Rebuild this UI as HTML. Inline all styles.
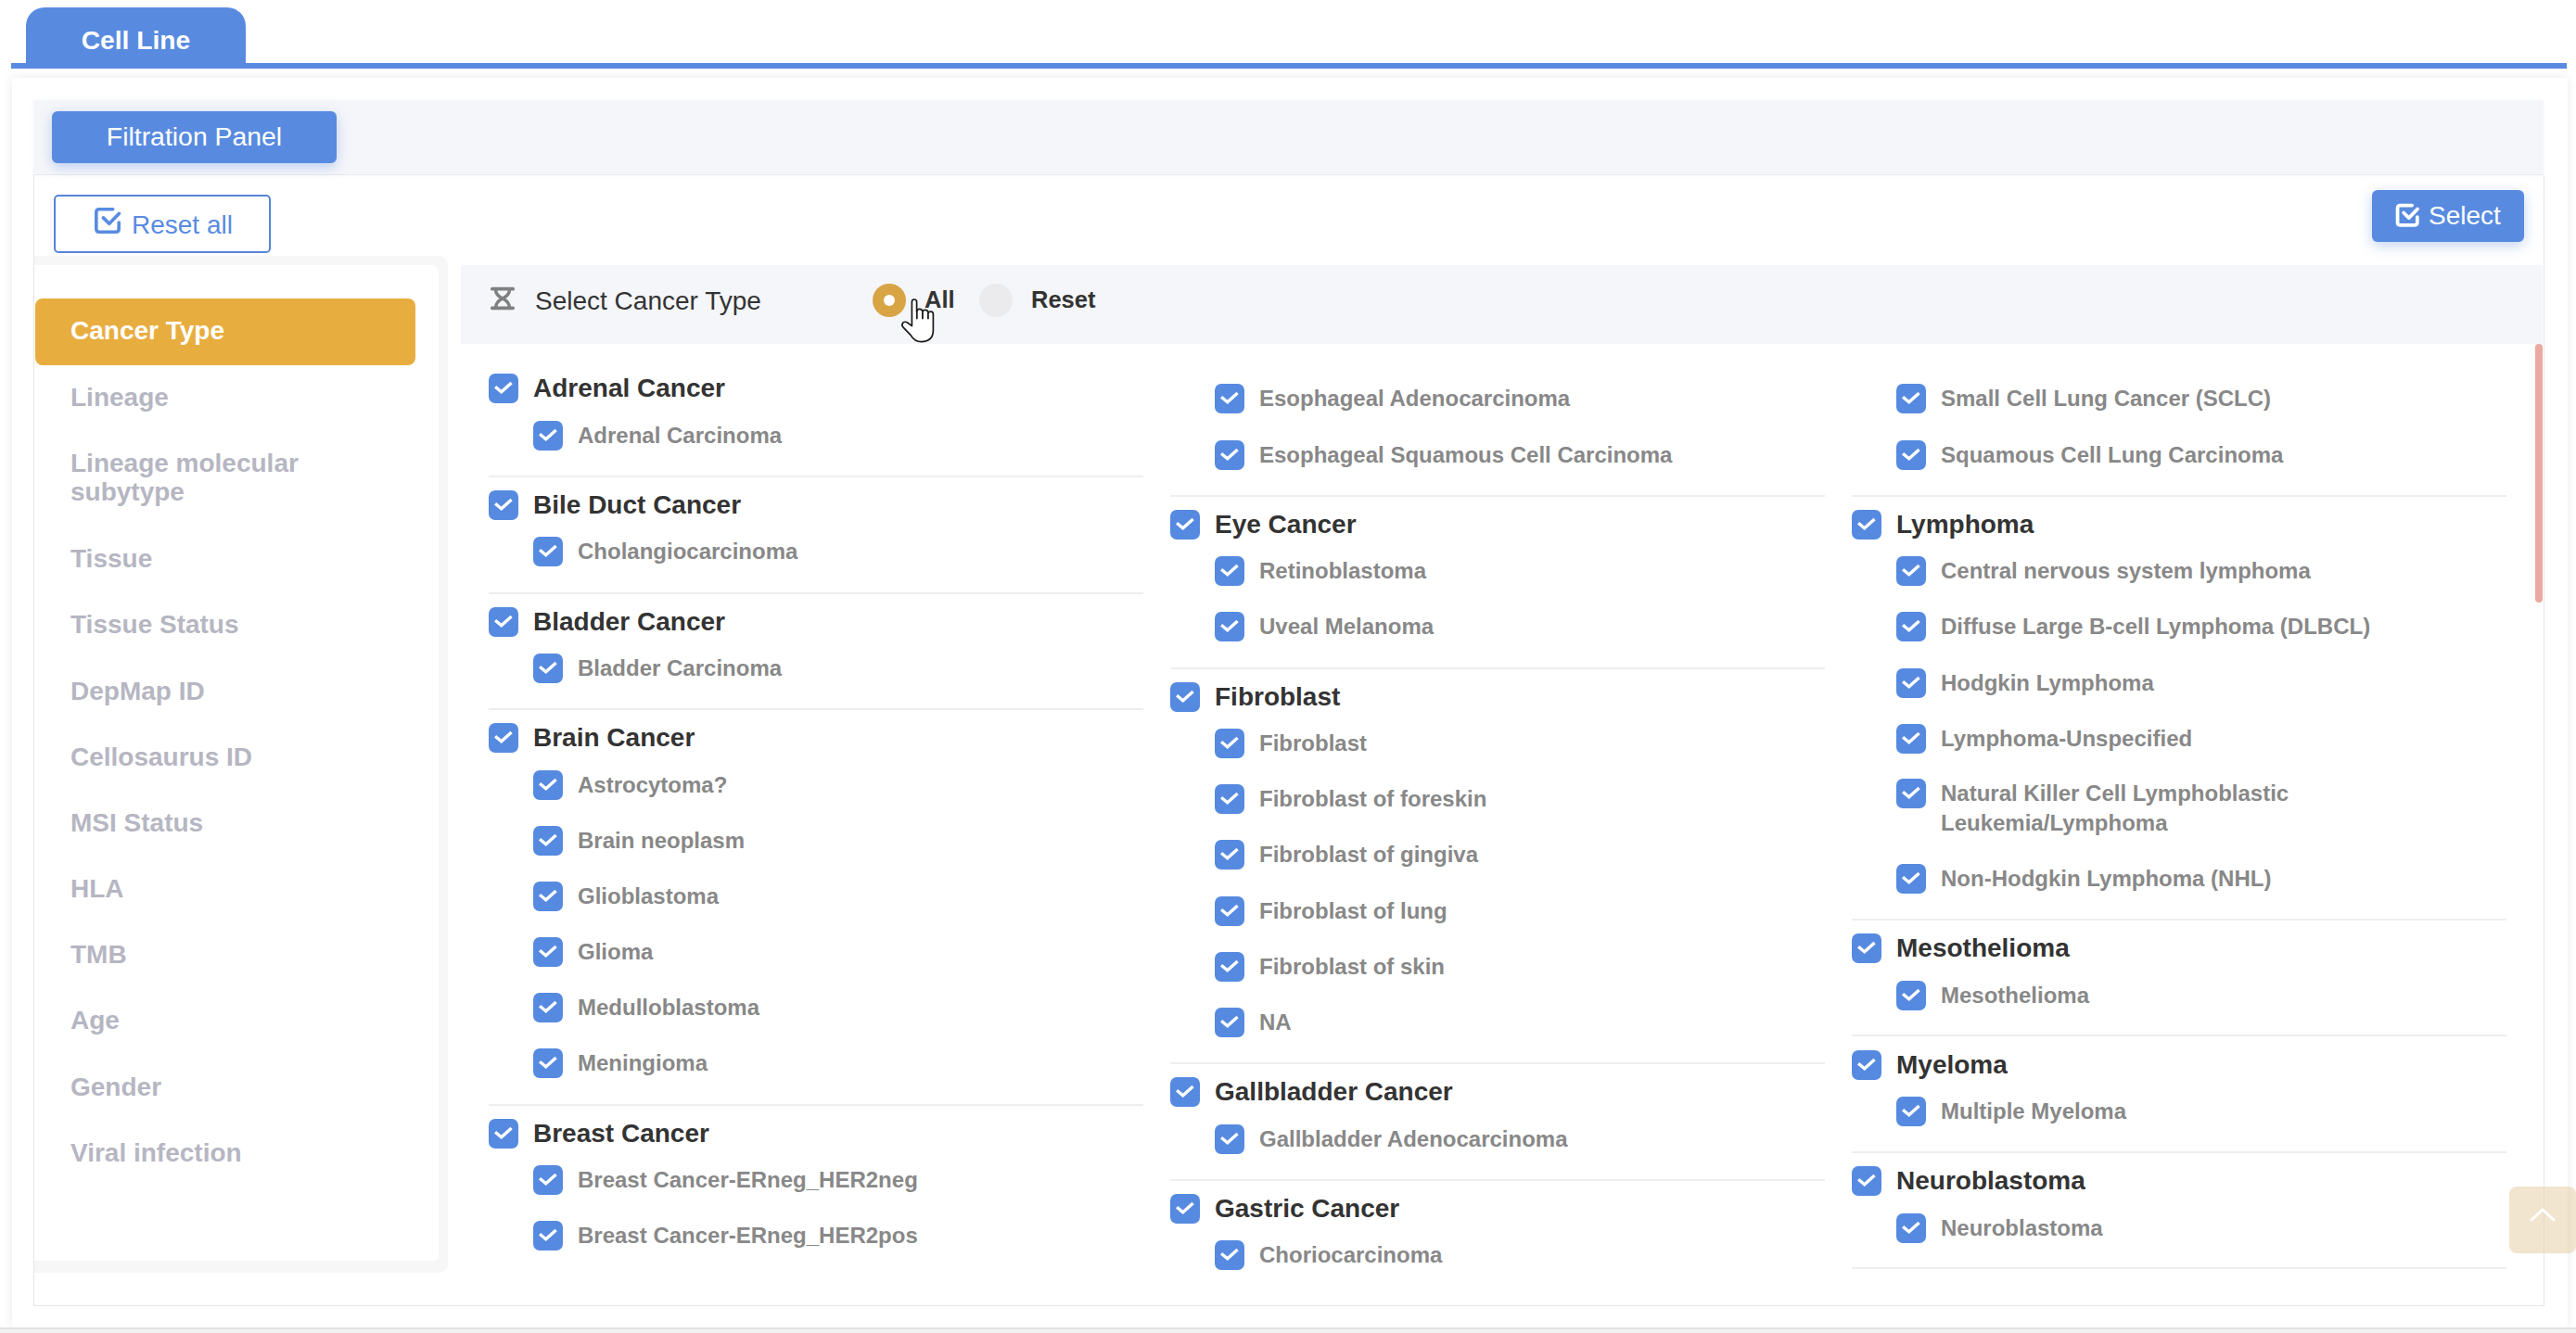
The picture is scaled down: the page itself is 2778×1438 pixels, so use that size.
<!DOCTYPE html>
<html><head><meta charset="utf-8">
<style>
*{box-sizing:border-box;margin:0;padding:0}
html,body{width:2778px;height:1438px;overflow:hidden;background:#fff;font-family:"Liberation Sans",sans-serif;position:relative}
.abs{position:absolute}
.cb{position:absolute;width:32px;height:32px;border-radius:7px;background:#568ae0}
.cb svg{display:block}
svg{overflow:visible}
.ht{position:absolute;font-size:28px;font-weight:bold;color:#333;line-height:32px;white-space:nowrap}
.st{position:absolute;font-size:24px;font-weight:bold;color:#888;line-height:32px;white-space:nowrap}
.sep{position:absolute;width:706px;height:2px;background:#eeeeee}
.si{position:absolute;left:76px;font-size:28px;font-weight:bold;color:#b6b6c2;line-height:31px;white-space:nowrap}
</style></head><body>
<!-- tab -->
<div class="abs" style="left:28px;top:8px;width:237px;height:66px;background:#588be0;border-radius:20px 20px 0 0"></div>
<div class="abs" style="left:28px;top:25px;width:237px;text-align:center;color:#fff;font-weight:bold;font-size:28.2px;line-height:36px">Cell Line</div>
<div class="abs" style="left:12px;top:68px;width:2756px;height:6px;background:#588be0"></div>
<!-- outer panel -->
<div class="abs" style="left:13px;top:84px;width:2756px;height:1348px;background:#fff;box-shadow:0 0 10px rgba(0,0,0,0.09)"></div>
<div class="abs" style="left:0;top:1432px;width:2778px;height:6px;background:#f2f2f2;border-top:2px solid #e2e2e2"></div>
<!-- filtration header -->
<div class="abs" style="left:36px;top:108px;width:2707px;height:81px;background:#f5f6fa;border-bottom:1px solid #e9e9ee;box-shadow:0 0 6px rgba(0,0,0,0.03)"></div>
<div class="abs" style="left:56px;top:120px;width:307px;height:56px;background:#588be0;border-radius:6px;box-shadow:0 4px 14px rgba(80,130,220,0.35)"></div>
<div class="abs" style="left:56px;top:129.5px;width:307px;text-align:center;color:#fff;font-size:28.4px;line-height:34px">Filtration Panel</div>
<!-- body panel -->
<div class="abs" style="left:36px;top:189px;width:2708px;height:1220px;border:1px solid #e6e6e6;border-top:none"></div>
<!-- reset all -->
<div class="abs" style="left:58px;top:210px;width:234px;height:63px;border:2px solid #5585d8;border-radius:5px;background:#fff"></div>
<svg class="abs" style="left:102px;top:223.5px" width="28" height="28" viewBox="0 0 28 28"><path d="M19.7 1.8 H5 Q1.8 1.8 1.8 5 V23 Q1.8 26.2 5 26.2 H23 Q26.2 26.2 26.2 23 V16.1" fill="none" stroke="#588be0" stroke-width="3.6" stroke-linecap="round"/><polyline points="9.3,10.9 15.8,17.3 26.5,6.3" fill="none" stroke="#588be0" stroke-width="3.6" stroke-linecap="round" stroke-linejoin="round"/></svg>
<div class="abs" style="left:142px;top:226.5px;color:#588be0;font-size:28px;line-height:32px">Reset all</div>
<!-- select -->
<div class="abs" style="left:2558px;top:205px;width:164px;height:56px;background:#588be0;border-radius:6px;box-shadow:0 4px 14px rgba(80,130,220,0.35)"></div>
<svg class="abs" style="left:2584px;top:220px" width="24.4" height="24.4" viewBox="0 0 28 28"><path d="M19.7 1.8 H5 Q1.8 1.8 1.8 5 V23 Q1.8 26.2 5 26.2 H23 Q26.2 26.2 26.2 23 V16.1" fill="none" stroke="#fff" stroke-width="4.3" stroke-linecap="round"/><polyline points="9.3,10.9 15.8,17.3 26.5,6.3" fill="none" stroke="#fff" stroke-width="4.3" stroke-linecap="round" stroke-linejoin="round"/></svg>
<div class="abs" style="left:2619px;top:216.5px;color:#fff;font-size:28px;line-height:32px">Select</div>
<!-- sidebar card -->
<div class="abs" style="left:37px;top:276px;width:445.5px;height:1096.5px;background:#f7f7f7;border-radius:0 10px 10px 0"></div>
<div class="abs" style="left:37px;top:286px;width:436px;height:1074px;background:#fff;border-radius:0 8px 6px 0"></div>
<div class="abs" style="left:36px;top:286px;width:1px;height:1122px;background:#e6e6e6"></div>
<div class="abs" style="left:38px;top:322px;width:410px;height:71.5px;background:#e8ad3f;border-radius:8px"></div>
<div class="abs" style="left:76px;top:341px;color:#fff;font-size:28px;font-weight:bold;line-height:31px">Cancer Type</div>
<div class="si" style="top:413.0px">Lineage</div>
<div class="si" style="top:484.2px">Lineage molecular<br>subytype</div>
<div class="si" style="top:587.3px">Tissue</div>
<div class="si" style="top:658.4px">Tissue Status</div>
<div class="si" style="top:729.6px">DepMap ID</div>
<div class="si" style="top:800.7px">Cellosaurus ID</div>
<div class="si" style="top:871.9px">MSI Status</div>
<div class="si" style="top:943.0px">HLA</div>
<div class="si" style="top:1014.2px">TMB</div>
<div class="si" style="top:1085.3px">Age</div>
<div class="si" style="top:1156.5px">Gender</div>
<div class="si" style="top:1227.7px">Viral infection</div>
<!-- content header -->
<div class="abs" style="left:497px;top:286px;width:2245px;height:85px;background:#f5f6fa;border-radius:3px 3px 0 0"></div>
<svg class="abs" style="left:528px;top:308.3px" width="28" height="28" viewBox="0 0 30 30"><path d="M3 4 H27 M3 26 H27" stroke="#808080" stroke-width="4" stroke-linecap="round"/><path d="M7 4.5 Q7 11 15 15 Q23 11 23 4.5 M7 25.5 Q7 19 15 15 Q23 19 23 25.5" fill="none" stroke="#808080" stroke-width="3.8"/></svg>
<div class="abs" style="left:577px;top:308.5px;color:#333;font-size:28px;line-height:32px">Select Cancer Type</div>
<div class="abs" style="left:941px;top:306px;width:36px;height:36px;border-radius:50%;background:#d8a444"></div>
<div class="abs" style="left:953px;top:318px;width:12px;height:12px;border-radius:50%;background:#fff"></div>
<div class="abs" style="left:997px;top:307px;color:#333;font-size:25.5px;font-weight:bold;line-height:32px">All</div>
<div class="abs" style="left:1056px;top:306px;width:36px;height:36px;border-radius:50%;background:#ebebed"></div>
<div class="abs" style="left:1112px;top:307px;color:#333;font-size:25.5px;font-weight:bold;line-height:32px">Reset</div>
<!-- content area -->
<div class="abs" style="left:497px;top:371px;width:2245px;height:1004px;overflow:hidden">
<div style="position:absolute;left:-497px;top:-371px;width:2778px;height:1438px">
<div class="cb" style="left:527px;top:403px"><svg width="32" height="32" viewBox="0 0 32 32"><polyline points="7.1,14.3 13.7,19.7 24.6,9.9" fill="none" stroke="#fff" stroke-width="3.4" stroke-linecap="butt" stroke-linejoin="miter"/></svg></div>
<div class="ht" style="left:575px;top:403px">Adrenal Cancer</div>
<div class="cb" style="left:575px;top:454px"><svg width="32" height="32" viewBox="0 0 32 32"><polyline points="7.1,14.3 13.7,19.7 24.6,9.9" fill="none" stroke="#fff" stroke-width="3.4" stroke-linecap="butt" stroke-linejoin="miter"/></svg></div>
<div class="st" style="left:623px;top:454px">Adrenal Carcinoma</div>
<div class="sep" style="left:527px;top:513px"></div>
<div class="cb" style="left:527px;top:529px"><svg width="32" height="32" viewBox="0 0 32 32"><polyline points="7.1,14.3 13.7,19.7 24.6,9.9" fill="none" stroke="#fff" stroke-width="3.4" stroke-linecap="butt" stroke-linejoin="miter"/></svg></div>
<div class="ht" style="left:575px;top:529px">Bile Duct Cancer</div>
<div class="cb" style="left:575px;top:579px"><svg width="32" height="32" viewBox="0 0 32 32"><polyline points="7.1,14.3 13.7,19.7 24.6,9.9" fill="none" stroke="#fff" stroke-width="3.4" stroke-linecap="butt" stroke-linejoin="miter"/></svg></div>
<div class="st" style="left:623px;top:579px">Cholangiocarcinoma</div>
<div class="sep" style="left:527px;top:639px"></div>
<div class="cb" style="left:527px;top:655px"><svg width="32" height="32" viewBox="0 0 32 32"><polyline points="7.1,14.3 13.7,19.7 24.6,9.9" fill="none" stroke="#fff" stroke-width="3.4" stroke-linecap="butt" stroke-linejoin="miter"/></svg></div>
<div class="ht" style="left:575px;top:655px">Bladder Cancer</div>
<div class="cb" style="left:575px;top:705px"><svg width="32" height="32" viewBox="0 0 32 32"><polyline points="7.1,14.3 13.7,19.7 24.6,9.9" fill="none" stroke="#fff" stroke-width="3.4" stroke-linecap="butt" stroke-linejoin="miter"/></svg></div>
<div class="st" style="left:623px;top:705px">Bladder Carcinoma</div>
<div class="sep" style="left:527px;top:764px"></div>
<div class="cb" style="left:527px;top:780px"><svg width="32" height="32" viewBox="0 0 32 32"><polyline points="7.1,14.3 13.7,19.7 24.6,9.9" fill="none" stroke="#fff" stroke-width="3.4" stroke-linecap="butt" stroke-linejoin="miter"/></svg></div>
<div class="ht" style="left:575px;top:780px">Brain Cancer</div>
<div class="cb" style="left:575px;top:831px"><svg width="32" height="32" viewBox="0 0 32 32"><polyline points="7.1,14.3 13.7,19.7 24.6,9.9" fill="none" stroke="#fff" stroke-width="3.4" stroke-linecap="butt" stroke-linejoin="miter"/></svg></div>
<div class="st" style="left:623px;top:831px">Astrocytoma?</div>
<div class="cb" style="left:575px;top:891px"><svg width="32" height="32" viewBox="0 0 32 32"><polyline points="7.1,14.3 13.7,19.7 24.6,9.9" fill="none" stroke="#fff" stroke-width="3.4" stroke-linecap="butt" stroke-linejoin="miter"/></svg></div>
<div class="st" style="left:623px;top:891px">Brain neoplasm</div>
<div class="cb" style="left:575px;top:951px"><svg width="32" height="32" viewBox="0 0 32 32"><polyline points="7.1,14.3 13.7,19.7 24.6,9.9" fill="none" stroke="#fff" stroke-width="3.4" stroke-linecap="butt" stroke-linejoin="miter"/></svg></div>
<div class="st" style="left:623px;top:951px">Glioblastoma</div>
<div class="cb" style="left:575px;top:1011px"><svg width="32" height="32" viewBox="0 0 32 32"><polyline points="7.1,14.3 13.7,19.7 24.6,9.9" fill="none" stroke="#fff" stroke-width="3.4" stroke-linecap="butt" stroke-linejoin="miter"/></svg></div>
<div class="st" style="left:623px;top:1011px">Glioma</div>
<div class="cb" style="left:575px;top:1071px"><svg width="32" height="32" viewBox="0 0 32 32"><polyline points="7.1,14.3 13.7,19.7 24.6,9.9" fill="none" stroke="#fff" stroke-width="3.4" stroke-linecap="butt" stroke-linejoin="miter"/></svg></div>
<div class="st" style="left:623px;top:1071px">Medulloblastoma</div>
<div class="cb" style="left:575px;top:1131px"><svg width="32" height="32" viewBox="0 0 32 32"><polyline points="7.1,14.3 13.7,19.7 24.6,9.9" fill="none" stroke="#fff" stroke-width="3.4" stroke-linecap="butt" stroke-linejoin="miter"/></svg></div>
<div class="st" style="left:623px;top:1131px">Meningioma</div>
<div class="sep" style="left:527px;top:1191px"></div>
<div class="cb" style="left:527px;top:1207px"><svg width="32" height="32" viewBox="0 0 32 32"><polyline points="7.1,14.3 13.7,19.7 24.6,9.9" fill="none" stroke="#fff" stroke-width="3.4" stroke-linecap="butt" stroke-linejoin="miter"/></svg></div>
<div class="ht" style="left:575px;top:1207px">Breast Cancer</div>
<div class="cb" style="left:575px;top:1257px"><svg width="32" height="32" viewBox="0 0 32 32"><polyline points="7.1,14.3 13.7,19.7 24.6,9.9" fill="none" stroke="#fff" stroke-width="3.4" stroke-linecap="butt" stroke-linejoin="miter"/></svg></div>
<div class="st" style="left:623px;top:1257px">Breast Cancer-ERneg_HER2neg</div>
<div class="cb" style="left:575px;top:1317px"><svg width="32" height="32" viewBox="0 0 32 32"><polyline points="7.1,14.3 13.7,19.7 24.6,9.9" fill="none" stroke="#fff" stroke-width="3.4" stroke-linecap="butt" stroke-linejoin="miter"/></svg></div>
<div class="st" style="left:623px;top:1317px">Breast Cancer-ERneg_HER2pos</div>
<div class="cb" style="left:575px;top:1377px"><svg width="32" height="32" viewBox="0 0 32 32"><polyline points="7.1,14.3 13.7,19.7 24.6,9.9" fill="none" stroke="#fff" stroke-width="3.4" stroke-linecap="butt" stroke-linejoin="miter"/></svg></div>
<div class="st" style="left:623px;top:1377px">Breast Cancer-ERpos_HER2neg</div>
<div class="cb" style="left:1310px;top:414px"><svg width="32" height="32" viewBox="0 0 32 32"><polyline points="7.1,14.3 13.7,19.7 24.6,9.9" fill="none" stroke="#fff" stroke-width="3.4" stroke-linecap="butt" stroke-linejoin="miter"/></svg></div>
<div class="st" style="left:1358px;top:414px">Esophageal Adenocarcinoma</div>
<div class="cb" style="left:1310px;top:475px"><svg width="32" height="32" viewBox="0 0 32 32"><polyline points="7.1,14.3 13.7,19.7 24.6,9.9" fill="none" stroke="#fff" stroke-width="3.4" stroke-linecap="butt" stroke-linejoin="miter"/></svg></div>
<div class="st" style="left:1358px;top:475px">Esophageal Squamous Cell Carcinoma</div>
<div class="sep" style="left:1262px;top:534px"></div>
<div class="cb" style="left:1262px;top:550px"><svg width="32" height="32" viewBox="0 0 32 32"><polyline points="7.1,14.3 13.7,19.7 24.6,9.9" fill="none" stroke="#fff" stroke-width="3.4" stroke-linecap="butt" stroke-linejoin="miter"/></svg></div>
<div class="ht" style="left:1310px;top:550px">Eye Cancer</div>
<div class="cb" style="left:1310px;top:600px"><svg width="32" height="32" viewBox="0 0 32 32"><polyline points="7.1,14.3 13.7,19.7 24.6,9.9" fill="none" stroke="#fff" stroke-width="3.4" stroke-linecap="butt" stroke-linejoin="miter"/></svg></div>
<div class="st" style="left:1358px;top:600px">Retinoblastoma</div>
<div class="cb" style="left:1310px;top:660px"><svg width="32" height="32" viewBox="0 0 32 32"><polyline points="7.1,14.3 13.7,19.7 24.6,9.9" fill="none" stroke="#fff" stroke-width="3.4" stroke-linecap="butt" stroke-linejoin="miter"/></svg></div>
<div class="st" style="left:1358px;top:660px">Uveal Melanoma</div>
<div class="sep" style="left:1262px;top:720px"></div>
<div class="cb" style="left:1262px;top:736px"><svg width="32" height="32" viewBox="0 0 32 32"><polyline points="7.1,14.3 13.7,19.7 24.6,9.9" fill="none" stroke="#fff" stroke-width="3.4" stroke-linecap="butt" stroke-linejoin="miter"/></svg></div>
<div class="ht" style="left:1310px;top:736px">Fibroblast</div>
<div class="cb" style="left:1310px;top:786px"><svg width="32" height="32" viewBox="0 0 32 32"><polyline points="7.1,14.3 13.7,19.7 24.6,9.9" fill="none" stroke="#fff" stroke-width="3.4" stroke-linecap="butt" stroke-linejoin="miter"/></svg></div>
<div class="st" style="left:1358px;top:786px">Fibroblast</div>
<div class="cb" style="left:1310px;top:846px"><svg width="32" height="32" viewBox="0 0 32 32"><polyline points="7.1,14.3 13.7,19.7 24.6,9.9" fill="none" stroke="#fff" stroke-width="3.4" stroke-linecap="butt" stroke-linejoin="miter"/></svg></div>
<div class="st" style="left:1358px;top:846px">Fibroblast of foreskin</div>
<div class="cb" style="left:1310px;top:906px"><svg width="32" height="32" viewBox="0 0 32 32"><polyline points="7.1,14.3 13.7,19.7 24.6,9.9" fill="none" stroke="#fff" stroke-width="3.4" stroke-linecap="butt" stroke-linejoin="miter"/></svg></div>
<div class="st" style="left:1358px;top:906px">Fibroblast of gingiva</div>
<div class="cb" style="left:1310px;top:967px"><svg width="32" height="32" viewBox="0 0 32 32"><polyline points="7.1,14.3 13.7,19.7 24.6,9.9" fill="none" stroke="#fff" stroke-width="3.4" stroke-linecap="butt" stroke-linejoin="miter"/></svg></div>
<div class="st" style="left:1358px;top:967px">Fibroblast of lung</div>
<div class="cb" style="left:1310px;top:1027px"><svg width="32" height="32" viewBox="0 0 32 32"><polyline points="7.1,14.3 13.7,19.7 24.6,9.9" fill="none" stroke="#fff" stroke-width="3.4" stroke-linecap="butt" stroke-linejoin="miter"/></svg></div>
<div class="st" style="left:1358px;top:1027px">Fibroblast of skin</div>
<div class="cb" style="left:1310px;top:1087px"><svg width="32" height="32" viewBox="0 0 32 32"><polyline points="7.1,14.3 13.7,19.7 24.6,9.9" fill="none" stroke="#fff" stroke-width="3.4" stroke-linecap="butt" stroke-linejoin="miter"/></svg></div>
<div class="st" style="left:1358px;top:1087px">NA</div>
<div class="sep" style="left:1262px;top:1146px"></div>
<div class="cb" style="left:1262px;top:1162px"><svg width="32" height="32" viewBox="0 0 32 32"><polyline points="7.1,14.3 13.7,19.7 24.6,9.9" fill="none" stroke="#fff" stroke-width="3.4" stroke-linecap="butt" stroke-linejoin="miter"/></svg></div>
<div class="ht" style="left:1310px;top:1162px">Gallbladder Cancer</div>
<div class="cb" style="left:1310px;top:1213px"><svg width="32" height="32" viewBox="0 0 32 32"><polyline points="7.1,14.3 13.7,19.7 24.6,9.9" fill="none" stroke="#fff" stroke-width="3.4" stroke-linecap="butt" stroke-linejoin="miter"/></svg></div>
<div class="st" style="left:1358px;top:1213px">Gallbladder Adenocarcinoma</div>
<div class="sep" style="left:1262px;top:1272px"></div>
<div class="cb" style="left:1262px;top:1288px"><svg width="32" height="32" viewBox="0 0 32 32"><polyline points="7.1,14.3 13.7,19.7 24.6,9.9" fill="none" stroke="#fff" stroke-width="3.4" stroke-linecap="butt" stroke-linejoin="miter"/></svg></div>
<div class="ht" style="left:1310px;top:1288px">Gastric Cancer</div>
<div class="cb" style="left:1310px;top:1338px"><svg width="32" height="32" viewBox="0 0 32 32"><polyline points="7.1,14.3 13.7,19.7 24.6,9.9" fill="none" stroke="#fff" stroke-width="3.4" stroke-linecap="butt" stroke-linejoin="miter"/></svg></div>
<div class="st" style="left:1358px;top:1338px">Choriocarcinoma</div>
<div class="cb" style="left:1310px;top:1398px"><svg width="32" height="32" viewBox="0 0 32 32"><polyline points="7.1,14.3 13.7,19.7 24.6,9.9" fill="none" stroke="#fff" stroke-width="3.4" stroke-linecap="butt" stroke-linejoin="miter"/></svg></div>
<div class="st" style="left:1358px;top:1398px">Gastric Adenocarcinoma</div>
<div class="cb" style="left:2045px;top:414px"><svg width="32" height="32" viewBox="0 0 32 32"><polyline points="7.1,14.3 13.7,19.7 24.6,9.9" fill="none" stroke="#fff" stroke-width="3.4" stroke-linecap="butt" stroke-linejoin="miter"/></svg></div>
<div class="st" style="left:2093px;top:414px">Small Cell Lung Cancer (SCLC)</div>
<div class="cb" style="left:2045px;top:475px"><svg width="32" height="32" viewBox="0 0 32 32"><polyline points="7.1,14.3 13.7,19.7 24.6,9.9" fill="none" stroke="#fff" stroke-width="3.4" stroke-linecap="butt" stroke-linejoin="miter"/></svg></div>
<div class="st" style="left:2093px;top:475px">Squamous Cell Lung Carcinoma</div>
<div class="sep" style="left:1997px;top:534px"></div>
<div class="cb" style="left:1997px;top:550px"><svg width="32" height="32" viewBox="0 0 32 32"><polyline points="7.1,14.3 13.7,19.7 24.6,9.9" fill="none" stroke="#fff" stroke-width="3.4" stroke-linecap="butt" stroke-linejoin="miter"/></svg></div>
<div class="ht" style="left:2045px;top:550px">Lymphoma</div>
<div class="cb" style="left:2045px;top:600px"><svg width="32" height="32" viewBox="0 0 32 32"><polyline points="7.1,14.3 13.7,19.7 24.6,9.9" fill="none" stroke="#fff" stroke-width="3.4" stroke-linecap="butt" stroke-linejoin="miter"/></svg></div>
<div class="st" style="left:2093px;top:600px">Central nervous system lymphoma</div>
<div class="cb" style="left:2045px;top:660px"><svg width="32" height="32" viewBox="0 0 32 32"><polyline points="7.1,14.3 13.7,19.7 24.6,9.9" fill="none" stroke="#fff" stroke-width="3.4" stroke-linecap="butt" stroke-linejoin="miter"/></svg></div>
<div class="st" style="left:2093px;top:660px">Diffuse Large B-cell Lymphoma (DLBCL)</div>
<div class="cb" style="left:2045px;top:721px"><svg width="32" height="32" viewBox="0 0 32 32"><polyline points="7.1,14.3 13.7,19.7 24.6,9.9" fill="none" stroke="#fff" stroke-width="3.4" stroke-linecap="butt" stroke-linejoin="miter"/></svg></div>
<div class="st" style="left:2093px;top:721px">Hodgkin Lymphoma</div>
<div class="cb" style="left:2045px;top:781px"><svg width="32" height="32" viewBox="0 0 32 32"><polyline points="7.1,14.3 13.7,19.7 24.6,9.9" fill="none" stroke="#fff" stroke-width="3.4" stroke-linecap="butt" stroke-linejoin="miter"/></svg></div>
<div class="st" style="left:2093px;top:781px">Lymphoma-Unspecified</div>
<div class="cb" style="left:2045px;top:840px"><svg width="32" height="32" viewBox="0 0 32 32"><polyline points="7.1,14.3 13.7,19.7 24.6,9.9" fill="none" stroke="#fff" stroke-width="3.4" stroke-linecap="butt" stroke-linejoin="miter"/></svg></div>
<div class="st" style="left:2093px;top:840px">Natural Killer Cell Lymphoblastic<br>Leukemia/Lymphoma</div>
<div class="cb" style="left:2045px;top:932px"><svg width="32" height="32" viewBox="0 0 32 32"><polyline points="7.1,14.3 13.7,19.7 24.6,9.9" fill="none" stroke="#fff" stroke-width="3.4" stroke-linecap="butt" stroke-linejoin="miter"/></svg></div>
<div class="st" style="left:2093px;top:932px">Non-Hodgkin Lymphoma (NHL)</div>
<div class="sep" style="left:1997px;top:991px"></div>
<div class="cb" style="left:1997px;top:1007px"><svg width="32" height="32" viewBox="0 0 32 32"><polyline points="7.1,14.3 13.7,19.7 24.6,9.9" fill="none" stroke="#fff" stroke-width="3.4" stroke-linecap="butt" stroke-linejoin="miter"/></svg></div>
<div class="ht" style="left:2045px;top:1007px">Mesothelioma</div>
<div class="cb" style="left:2045px;top:1058px"><svg width="32" height="32" viewBox="0 0 32 32"><polyline points="7.1,14.3 13.7,19.7 24.6,9.9" fill="none" stroke="#fff" stroke-width="3.4" stroke-linecap="butt" stroke-linejoin="miter"/></svg></div>
<div class="st" style="left:2093px;top:1058px">Mesothelioma</div>
<div class="sep" style="left:1997px;top:1116px"></div>
<div class="cb" style="left:1997px;top:1133px"><svg width="32" height="32" viewBox="0 0 32 32"><polyline points="7.1,14.3 13.7,19.7 24.6,9.9" fill="none" stroke="#fff" stroke-width="3.4" stroke-linecap="butt" stroke-linejoin="miter"/></svg></div>
<div class="ht" style="left:2045px;top:1133px">Myeloma</div>
<div class="cb" style="left:2045px;top:1183px"><svg width="32" height="32" viewBox="0 0 32 32"><polyline points="7.1,14.3 13.7,19.7 24.6,9.9" fill="none" stroke="#fff" stroke-width="3.4" stroke-linecap="butt" stroke-linejoin="miter"/></svg></div>
<div class="st" style="left:2093px;top:1183px">Multiple Myeloma</div>
<div class="sep" style="left:1997px;top:1242px"></div>
<div class="cb" style="left:1997px;top:1258px"><svg width="32" height="32" viewBox="0 0 32 32"><polyline points="7.1,14.3 13.7,19.7 24.6,9.9" fill="none" stroke="#fff" stroke-width="3.4" stroke-linecap="butt" stroke-linejoin="miter"/></svg></div>
<div class="ht" style="left:2045px;top:1258px">Neuroblastoma</div>
<div class="cb" style="left:2045px;top:1309px"><svg width="32" height="32" viewBox="0 0 32 32"><polyline points="7.1,14.3 13.7,19.7 24.6,9.9" fill="none" stroke="#fff" stroke-width="3.4" stroke-linecap="butt" stroke-linejoin="miter"/></svg></div>
<div class="st" style="left:2093px;top:1309px">Neuroblastoma</div>
<div class="sep" style="left:1997px;top:1367px"></div>
<div class="cb" style="left:1997px;top:1384px"><svg width="32" height="32" viewBox="0 0 32 32"><polyline points="7.1,14.3 13.7,19.7 24.6,9.9" fill="none" stroke="#fff" stroke-width="3.4" stroke-linecap="butt" stroke-linejoin="miter"/></svg></div>
<div class="ht" style="left:2045px;top:1384px">Osteosarcoma</div>
<div class="cb" style="left:2045px;top:1434px"><svg width="32" height="32" viewBox="0 0 32 32"><polyline points="7.1,14.3 13.7,19.7 24.6,9.9" fill="none" stroke="#fff" stroke-width="3.4" stroke-linecap="butt" stroke-linejoin="miter"/></svg></div>
<div class="st" style="left:2093px;top:1434px">Osteosarcoma</div>
</div>
</div>
<!-- scrollbar -->
<div class="abs" style="left:2734px;top:371px;width:8px;height:279px;border-radius:4px;background:#eba99f"></div>
<!-- back to top -->
<div class="abs" style="left:2706px;top:1280px;width:72px;height:72px;border-radius:8px;background:rgba(228,204,160,0.5)"></div>
<svg class="abs" style="left:2726px;top:1300px" width="32" height="24" viewBox="0 0 32 24"><polyline points="4,16 16,5 28,16" fill="none" stroke="#fff" stroke-width="3" stroke-linecap="round" stroke-linejoin="round"/></svg>
<!-- cursor -->
<svg class="abs" style="left:965px;top:318px" width="50" height="54" viewBox="0 0 50 54"><path d="M18.4 33.6 V7.8 Q18.4 5 21 5 Q23.6 5 23.6 7.8 V17.8 Q24 15.4 26.7 15.4 Q29.5 15.4 29.9 18.2 Q30.4 16.4 32.9 16.4 Q35.7 16.4 36 19.4 Q36.5 18.2 38.9 18.2 Q41.4 18.2 41.4 21 V38 Q41.4 50.6 28.5 50.6 Q21.2 50.6 17.2 43.6 L8.6 34.6 Q7 32.4 8.8 30.2 Q10.8 28.4 13.5 30 L18.4 33.6 Z" fill="#fff" stroke="#1a1a1a" stroke-width="1.7" stroke-linejoin="round"/><path d="M23.8 17 V26.3 M29.9 18.5 V26.3 M35.9 19.5 V26.3" stroke="#1a1a1a" stroke-width="1.8"/></svg>
</body></html>
